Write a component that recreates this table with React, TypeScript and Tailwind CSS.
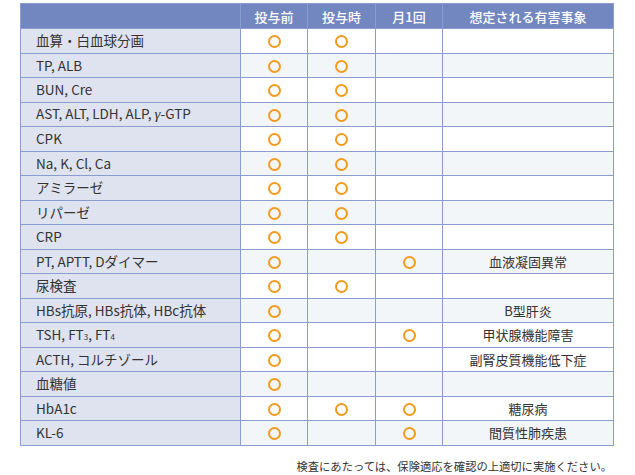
const rows: { label: React.ReactNode; marks: [boolean, boolean, boolean]; event?: string; shade: boolean }[] = [
  { label: "血算・白血球分画", marks: [true, true, false], shade: false },
  { label: "TP, ALB", marks: [true, true, false], shade: true },
  { label: "BUN, Cre", marks: [true, true, false], shade: false },
  {
    label: (
      <>
        AST, ALT, LDH, ALP, <span className="font-['Liberation_Serif'] italic text-[15px]">γ</span>-GTP
      </>
    ),
    marks: [true, true, false],
    shade: true,
  },
  { label: "CPK", marks: [true, true, false], shade: false },
  { label: "Na, K, Cl, Ca", marks: [true, true, false], shade: true },
  { label: "アミラーゼ", marks: [true, true, false], shade: false },
  { label: "リパーゼ", marks: [true, true, false], shade: true },
  { label: "CRP", marks: [true, true, false], shade: false },
  { label: "PT, APTT, Dダイマー", marks: [true, false, true], event: "血液凝固異常", shade: true },
  { label: "尿検査", marks: [true, true, false], shade: false },
  { label: "HBs抗原, HBs抗体, HBc抗体", marks: [true, false, false], event: "B型肝炎", shade: true },
  {
    label: (
      <>
        TSH, FT<span className="text-[8px]">3</span>, FT<span className="text-[8px]">4</span>
      </>
    ),
    marks: [true, false, true],
    event: "甲状腺機能障害",
    shade: false,
  },
  { label: "ACTH, コルチゾール", marks: [true, false, false], event: "副腎皮質機能低下症", shade: false },
  { label: "血糖値", marks: [true, false, false], shade: true },
  { label: "HbA1c", marks: [true, true, true], event: "糖尿病", shade: false },
  { label: "KL-6", marks: [true, false, true], event: "間質性肺疾患", shade: true },
]

function Ring() {
  return <span className="inline-block w-[13px] h-[13px] rounded-full border-[2px] border-[#f39a1e] align-middle" />
}

export default function App() {
  return (
    <div className="w-[635px] h-[475px] bg-white font-['Noto_Sans_CJK_JP',sans-serif] text-[#333]">
      <div className="pt-[3px] pl-[20px]">
        <table className="border-collapse table-fixed w-[593px] text-[13px] leading-none">
          <colgroup>
            <col className="w-[220px]" />
            <col className="w-[67px]" />
            <col className="w-[68px]" />
            <col className="w-[67px]" />
            <col className="w-[171px]" />
          </colgroup>
          <thead>
            <tr className="h-[25px] bg-[#7286bf] text-white">
              <th className="border border-[#8a9dce]" />
              <th className="border border-[#8a9dce] font-medium">投与前</th>
              <th className="border border-[#8a9dce] font-medium">投与時</th>
              <th className="border border-[#8a9dce] font-medium">月1回</th>
              <th className="border border-[#8a9dce] font-medium">想定される有害事象</th>
            </tr>
          </thead>
          <tbody>
            {rows.map((r, i) => (
              <tr key={i} className="h-[24.5px]">
                <td className="border border-[#8a9dce] bg-[#dfe2ef] pl-[15px] whitespace-nowrap text-[13.5px]">{r.label}</td>
                {r.marks.map((m, j) => (
                  <td key={j} className={`border border-[#8a9dce] text-center ${r.shade ? "bg-[#f3f6f8]" : "bg-white"}`}>
                    {m && <Ring />}
                  </td>
                ))}
                <td className={`border border-[#8a9dce] text-center ${r.shade ? "bg-[#f3f6f8]" : "bg-white"}`}>
                  {r.event}
                </td>
              </tr>
            ))}
          </tbody>
        </table>
      </div>
      <p className="mt-[12px] pr-[23px] text-right text-[11.3px] text-[#333]">
        検査にあたっては、保険適応を確認の上適切に実施ください。
      </p>
    </div>
  )
}
